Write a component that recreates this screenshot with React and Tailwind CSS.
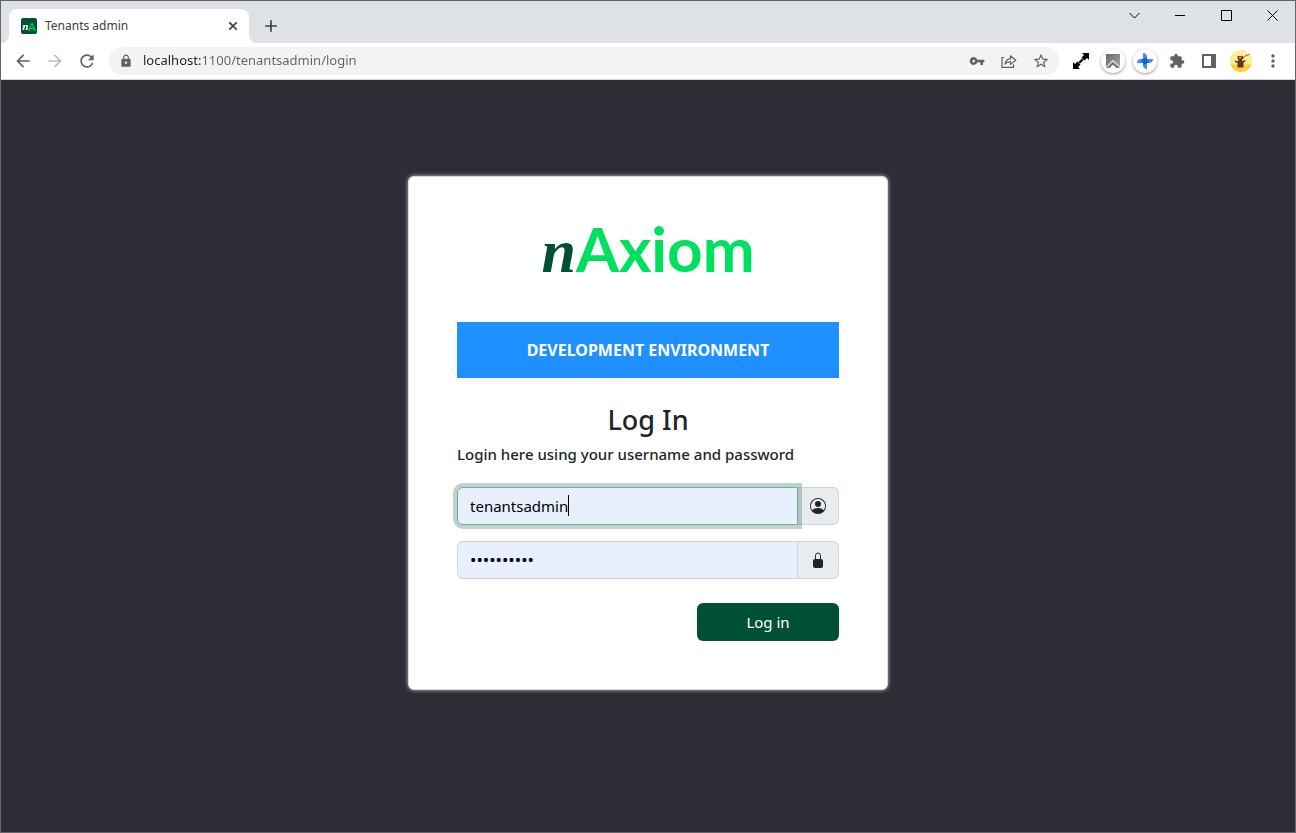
import { useState } from 'react';
import { MdArrowBack, MdArrowForward, MdRefresh, MdLock, MdVpnKey, MdStarBorder, MdExtension, MdMoreVert, MdAdd } from 'react-icons/md';
import { BsPersonCircle } from 'react-icons/bs';

const ShareIcon = () => (
  <svg width="16" height="16" viewBox="0 0 16 16" fill="none" stroke="currentColor" strokeWidth="1.2">
    <path d="M3 4.500H1v9.800h11.500v-3" />
    <path d="M4 11c.6-3.500 2.600-5.200 5.500-5.200V2.800L14.800 7.200 9.500 11.400V8.600C7 8.600 5.300 9.500 4 11z" strokeLinejoin="round" />
  </svg>
);

const ExpandIcon = () => (
  <svg width="18" height="18" viewBox="0 0 18 18" fill="#000">
    <path d="M10 1h7v7l-2-2-2.500 2.500-3-3L12 3zM8 17H1v-7l2 2 2.500-2.500 3 3L6 15z" />
    <path d="M6.500 10l3.500-3.500 1.500 1.500L8 11.500z" />
  </svg>
);

const ArrowUpIcon = () => (
  <svg width="24" height="24" viewBox="0 0 24 24">
    <defs>
      <linearGradient id="grayFade" x1="0" y1="0" x2="1" y2="1">
        <stop offset="0" stopColor="#666" />
        <stop offset="1" stopColor="#aaa" />
      </linearGradient>
    </defs>
    <path d="M5 5h14v13L12 11 5 18z" fill="url(#grayFade)" />
    <path d="M12 12.500l7 6.500h-3.500L12 15.800 8.500 19H5z" fill="#777" />
  </svg>
);

const PinwheelIcon = () => (
  <svg width="24" height="24" viewBox="0 0 24 24">
    <path d="M10 4c2.500 0 4 1.500 4 4v2h6c0 2.500-1.500 4-4 4h-2v6c-2.500 0-4-1.500-4-4v-2H4c0-2.500 1.500-4 4-4h2z" fill="#3f8cfb" />
    <path d="M10 10l4-2v2l-2 2zM14 10l2 4h-2l-2-2zM14 14l-4 2v-2l2-2zM10 14l-2-4h2l2 2z" fill="#1c5fcb" />
  </svg>
);

const SidePanelIcon = () => (
  <svg width="14" height="14" viewBox="0 0 14 14">
    <path d="M0 0h14v14H0zM2 2v10h7V2z" fill="#5f6368" fillRule="evenodd" />
  </svg>
);

const AvatarIcon = () => (
  <svg width="22" height="22" viewBox="0 0 22 22">
    <defs>
      <clipPath id="avatarClip"><circle cx="11" cy="11" r="11" /></clipPath>
    </defs>
    <g clipPath="url(#avatarClip)">
      <rect width="22" height="22" fill="#fbee96" />
      <rect y="14.500" width="22" height="8" fill="#fdd038" />
      <path d="M12.500 9c1.500-3 3.500-3.500 7-4.500" stroke="#8b5a2b" strokeWidth="1" fill="none" />
      <path d="M7.500 5.500l1.500.7h2.500l1.500-.7v3l-1 1.500 1.500 2.500v5H7.500v-5L8.500 10l-1-1.500z" fill="#6b3320" />
      <path d="M5 10.500l3.500 1-.5 1.500-3-1zM15 10l-3 1.500.5 1.500 3-1.500z" fill="#6b3320" />
      <path d="M8.500 7.200h3.500l-.8 1.600H9.200z" fill="#c98a52" />
    </g>
  </svg>
);

const PadlockIcon = () => (
  <svg width="16" height="16" viewBox="0 0 16 16">
    <path d="M5.500 7V3.500a2.500 2.500 0 0 1 5 0V7" fill="none" stroke="#212529" strokeWidth="1" />
    <rect x="3" y="7" width="10" height="9" rx="2" fill="#212529" />
  </svg>
);

const windowButtons = [
  { label: 'Search tabs', path: 'M0.500 3l5 5 5-5' },
  { label: 'Minimize', path: 'M0 5.500h10' },
  { label: 'Maximize', path: 'M0.500 0.500h10v10h-10z' },
  { label: 'Close', path: 'M0.500 0.500l10 10M10.500 0.500l-10 10' },
];

const extensions = [
  { label: 'Expand', icon: <ExpandIcon /> },
  { label: 'Scroll to top', icon: <ArrowUpIcon />, round: true },
  { label: 'Pinwheel', icon: <PinwheelIcon />, round: true },
  { label: 'Extensions', icon: <MdExtension size={16} /> },
  { label: 'Side panel', icon: <SidePanelIcon /> },
  { label: 'Profile', icon: <AvatarIcon /> },
  { label: 'Menu', icon: <MdMoreVert size={20} /> },
];

const ToolButton = ({ label, children, className = '' }) => (
  <button type="button" aria-label={label} className={`flex h-7 w-8 shrink-0 items-center justify-center ${className}`}>
    {children}
  </button>
);

const TabStrip = () => (
  <div className="flex h-[42px] justify-between bg-[#dee1e6]">
    <div className="flex items-end">
      <div className="h-2 w-2 bg-white"><div className="h-2 w-2 rounded-br-lg bg-[#dee1e6]" /></div>
      <div className="flex h-[34px] w-60 items-center rounded-t-lg bg-white pr-2 pl-3">
        <div className="flex h-4 w-4 items-center justify-center rounded-xs bg-[#005133] font-['Liberation_Serif'] text-[11px] leading-none">
          <span className="font-bold text-white italic">n</span>
          <span className="font-['Lato'] text-[#00e05f]">A</span>
        </div>
        <span className="ml-2 flex-1 text-xs text-[#3c4043]">Tenants admin</span>
        <button type="button" aria-label="Close tab" className="flex h-4 w-4 items-center justify-center text-[#3c4043]">
          <svg width="8" height="8" viewBox="0 0 8 8" stroke="currentColor" strokeWidth="1.600">
            <path d="M0 0l8 8M8 0L0 8" />
          </svg>
        </button>
      </div>
      <div className="h-2 w-2 bg-white"><div className="h-2 w-2 rounded-bl-lg bg-[#dee1e6]" /></div>
      <button type="button" aria-label="New tab" className="flex h-[34px] w-7 items-center justify-center text-[#3c4043]">
        <MdAdd size={20} />
      </button>
    </div>
    <div className="flex">
      {windowButtons.map((button) => (
        <button key={button.label} type="button" aria-label={button.label} className="flex h-7 w-[46px] items-center justify-center">
          <svg width="11" height="11" viewBox="0 0 11 11" fill="none" stroke="#000">
            <path d={button.path} />
          </svg>
        </button>
      ))}
    </div>
  </div>
);

const Toolbar = () => {
  const [url, setUrl] = useState('localhost:1100/tenantsadmin/login');

  return (
    <div className="flex h-[37px] items-center gap-1.5 border-b border-[#d5d7db] bg-white px-1.5 text-[#5f6368]">
      <div className="flex">
        <ToolButton label="Back"><MdArrowBack size={20} /></ToolButton>
        <ToolButton label="Forward" className="text-[#babcbe]"><MdArrowForward size={20} /></ToolButton>
        <ToolButton label="Reload"><MdRefresh size={20} /></ToolButton>
      </div>
      <div className="flex h-7 flex-1 items-center rounded-full bg-[#f1f3f4] pr-0.5 pl-2.5">
        <MdLock size={14} />
        <input
          type="text"
          aria-label="Address"
          value={url}
          onChange={(e) => setUrl(e.target.value)}
          className="ml-2.5 min-w-0 flex-1 bg-[linear-gradient(to_right,#202124_59px,#5f6368_59px)] bg-clip-text text-[13px] text-transparent caret-black outline-none"
        />
        <ToolButton label="Passwords"><MdVpnKey size={16} /></ToolButton>
        <ToolButton label="Share"><ShareIcon /></ToolButton>
        <ToolButton label="Bookmark"><MdStarBorder size={18} /></ToolButton>
      </div>
      <div className="flex">
        {extensions.map((ext) => (
          <ToolButton key={ext.label} label={ext.label}>
            {ext.round ? <span className="rounded-full bg-white shadow-[0_1px_3px_rgba(0,0,0,0.4)]">{ext.icon}</span> : ext.icon}
          </ToolButton>
        ))}
      </div>
    </div>
  );
};

const LoginCard = () => {
  const [username, setUsername] = useState('tenantsadmin');
  const [password, setPassword] = useState('password12');

  return (
    <form
      onSubmit={(e) => e.preventDefault()}
      className="w-full max-w-[480px] rounded-md border border-[#d9dadb] bg-white p-12 text-[#212529] shadow-[0_0_4px_rgba(255,255,255,0.7)]"
    >
      <div className="flex items-baseline justify-center text-[62px] leading-[46px]">
        <span className="font-['Liberation_Serif'] font-bold text-[#005133] italic">n</span>
        <span className="font-['Lato'] font-bold text-[#00e05f]">Axiom</span>
      </div>
      <div className="mt-12 flex h-14 items-center justify-center bg-[#1e90ff] text-base font-bold text-white">
        DEVELOPMENT ENVIRONMENT
      </div>
      <h1 className="mt-6 text-center text-[27px] leading-9 font-medium">Log In</h1>
      <p className="mt-1 text-[15px] leading-6 font-medium">Login here using your username and password</p>

      <div className="mt-[21px] flex h-[38px]">
        <div className="relative z-10 flex-1">
          <input
            id="username"
            type="text"
            aria-label="Username"
            value={username}
            onChange={(e) => setUsername(e.target.value)}
            className="h-full w-full rounded-l-md border border-[#80a899] bg-[#e8f0fe] px-3 text-[15px] text-black shadow-[0_0_0_4px_rgba(0,81,51,0.25)] outline-none"
          />
          <span className="absolute top-2 left-[111px] h-[21px] w-px bg-black" />
        </div>
        <label htmlFor="username" className="flex w-[41px] items-center justify-center rounded-r-md border border-l-0 border-[#ced4da] bg-[#e9ecef]">
          <BsPersonCircle size={16} />
        </label>
      </div>

      <div className="mt-4 flex h-[38px]">
        <input
          id="password"
          type="password"
          aria-label="Password"
          value={password}
          onChange={(e) => setPassword(e.target.value)}
          className="min-w-0 flex-1 rounded-l-md border border-[#ced4da] bg-[#e8f0fe] px-3 text-[17px] text-black outline-none"
        />
        <label htmlFor="password" className="flex w-[41px] items-center justify-center rounded-r-md border border-l-0 border-[#ced4da] bg-[#e9ecef]">
          <PadlockIcon />
        </label>
      </div>

      <div className="mt-6 flex justify-end">
        <button type="submit" className="h-[38px] w-[142px] rounded-md bg-[#005133] text-[15px] text-white">
          Log in
        </button>
      </div>
    </form>
  );
};

const App = () => (
  <div className="flex min-h-screen flex-col border border-[#646569] bg-[#2d2d35] font-['Noto_Sans',sans-serif]">
    <TabStrip />
    <Toolbar />
    <main className="flex flex-1 items-start justify-center px-4 pt-24 pb-16">
      <LoginCard />
    </main>
  </div>
);

export default App;
